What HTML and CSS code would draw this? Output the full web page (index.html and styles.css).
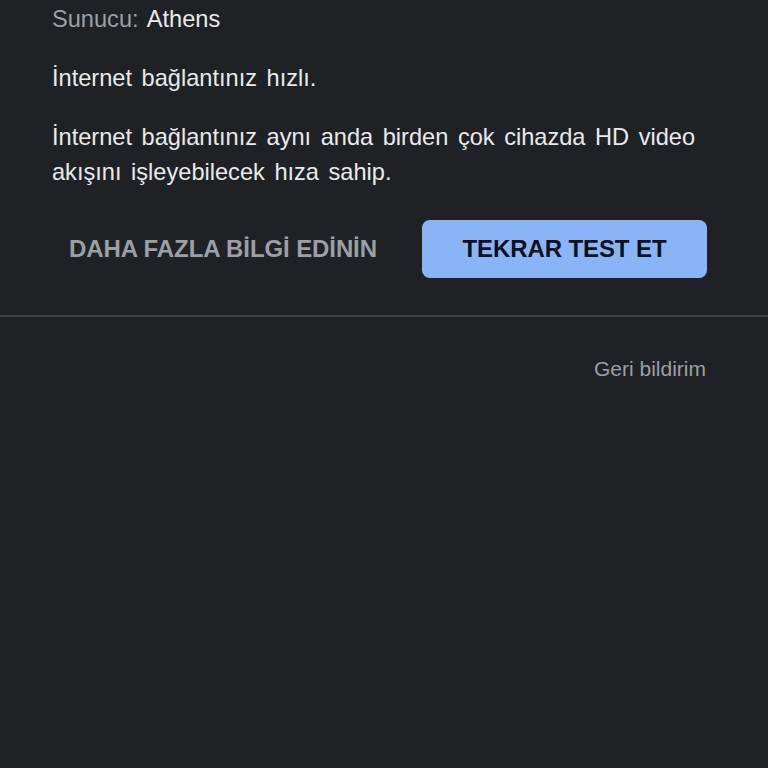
FILE: index.html
```html
<!DOCTYPE html>
<html lang="tr">
<head>
<meta charset="utf-8">
<link rel="stylesheet" href="styles.css">
</head>
<body>
<div class="page">
  <section class="card">
    <p class="server"><span class="label">Sunucu:</span> Athens</p>
    <p class="summary">İnternet bağlantınız hızlı.</p>
    <p class="detail">İnternet bağlantınız aynı anda birden çok cihazda HD video akışını işleyebilecek hıza sahip.</p>
    <div class="actions">
      <span class="link-btn">DAHA FAZLA BİLGİ EDİNİN</span>
      <span class="primary-btn">TEKRAR TEST ET</span>
    </div>
  </section>
  <div class="divider"></div>
  <div class="footer">
    <span class="feedback">Geri bildirim</span>
  </div>
</div>
</body>
</html>
```
FILE: styles.css
```css
html, body {
  margin: 0;
  padding: 0;
  background: #202124;
}
body {
  font-family: "Liberation Sans", Arial, sans-serif;
  color: #e8eaed;
  width: 768px;
  height: 768px;
  overflow: hidden;
}
.card {
  padding: 0 61px 0 52px;
}
.card p {
  margin: 0;
  font-size: 23.6px;
  line-height: 35px;
  word-spacing: 3px;
}
.server {
  padding-top: 2px;
}
.label {
  color: #9aa0a6;
}
.summary {
  margin-top: 24px !important;
}
.detail {
  margin-top: 24px !important;
}
.actions {
  display: flex;
  align-items: center;
  justify-content: space-between;
  margin-top: 30px;
  padding-left: 17px;
}
.link-btn {
  font-size: 24px;
  font-weight: bold;
  color: #9aa0a6;
  letter-spacing: -0.1px;
}
.primary-btn {
  width: 285px;
  height: 58px;
  box-sizing: border-box;
  background: #8ab4f8;
  color: #0d1117;
  border-radius: 8px;
  display: flex;
  align-items: center;
  justify-content: center;
  font-size: 24px;
  font-weight: bold;
  letter-spacing: -0.1px;
}
.divider {
  margin-top: 37px;
  height: 2px;
  background: #3c4043;
}
.footer {
  display: flex;
  justify-content: flex-end;
  padding: 40px 62px 0 0;
}
.feedback {
  font-size: 21px;
  line-height: 24px;
  color: #9aa0a6;
}
```
